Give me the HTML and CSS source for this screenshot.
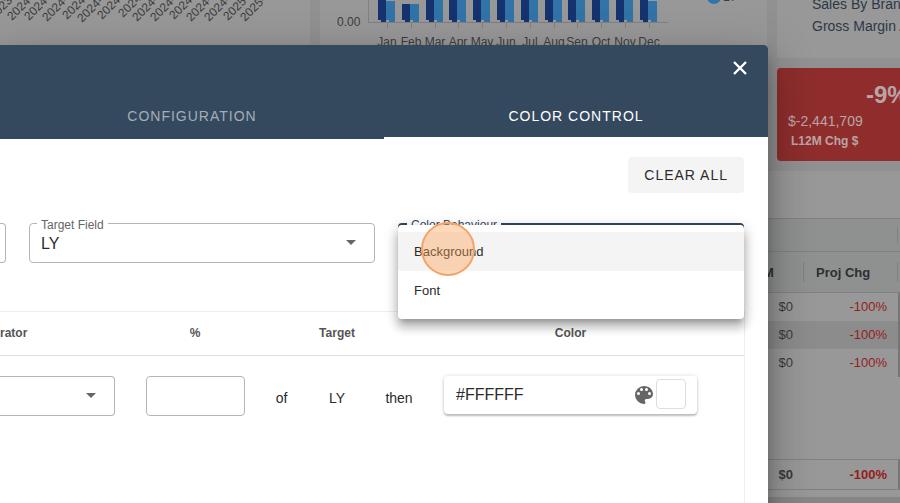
FILE: index.html
```html
<!DOCTYPE html>
<html lang="en">
<head>
<meta charset="utf-8">
<title>Color Control</title>
<link rel="stylesheet" href="styles.css">
</head>
<body>
<div class="dashboard">
  <div class="widgets">
    <section class="card">
      <svg class="chart dates" width="310" height="45" aria-label="Periods">
        <g id="dates"></g>
      </svg>
    </section>
    <section class="card">
      <svg class="chart" width="447" height="60" aria-label="Monthly sales">
        <path class="axis" d="M48.500 0V22M48 22.500H348"/>
        <g id="bars"></g>
        <text class="axis-value" x="17" y="26">0.00</text>
        <circle class="legend-dot" cx="394" cy="-3" r="7"/>
        <text x="403" y="1">LY</text>
      </svg>
    </section>
    <div class="side">
      <nav class="card links">
        <a href="#brand">Sales By Brand</a>
        <a href="#margin">Gross Margin Analysis</a>
      </nav>
      <section class="kpi">
        <strong class="kpi-change">-9%</strong>
        <span class="kpi-value">$-2,441,709</span>
        <span class="kpi-label">L12M Chg $</span>
      </section>
    </div>
  </div>
  <section class="card report">
    <table class="grid">
      <colgroup><col><col class="col-m"><col class="col-chg"><col class="col-bar"></colgroup>
      <thead>
        <tr class="band"><th></th><th></th><th><i></i></th><th></th></tr>
        <tr class="heads"><th></th><th>M<i></i></th><th>Proj Chg<i></i></th><th></th></tr>
      </thead>
      <tbody>
        <tr><td></td><td>$0</td><td class="neg">-100%</td><td class="thumb"></td></tr>
        <tr class="alt"><td></td><td>$0</td><td class="neg">-100%</td><td class="thumb"></td></tr>
        <tr><td></td><td>$0</td><td class="neg">-100%</td><td class="thumb"></td></tr>
        <tr class="filler"><td></td><td></td><td></td><td></td></tr>
      </tbody>
      <tfoot>
        <tr><td></td><td>$0</td><td class="neg">-100%</td><td class="thumb"></td></tr>
      </tfoot>
    </table>
  </section>
</div>

<div class="dialog" role="dialog" aria-label="Color control">
  <header class="dialog-head">
    <button class="close" type="button" aria-label="Close">
      <svg width="14" height="14" viewBox="0 0 14 14"><path d="M1 1L13 13M13 1L1 13"/></svg>
    </button>
    <div class="tabs" role="tablist">
      <button class="tab" type="button" role="tab">CONFIGURATION</button>
      <button class="tab active" type="button" role="tab" aria-selected="true">COLOR CONTROL</button>
    </div>
  </header>
  <div class="dialog-body">
    <div class="actions"><button class="clear" type="button">CLEAR ALL</button></div>
    <div class="fields">
      <div class="field cut"></div>
      <div class="field">
        <label for="target">Target Field</label>
        <select id="target"><option>LY</option></select>
        <svg class="caret" width="10" height="5" viewBox="0 0 10 5"><path d="M0 0L5 5L10 0Z"/></svg>
      </div>
      <div class="field focused">
        <label id="behaviour">Color Behaviour</label>
        <div class="menu" role="listbox" aria-labelledby="behaviour">
          <button class="option hovered" type="button" role="option">Background</button>
          <button class="option" type="button" role="option">Font</button>
          <span class="pointer"></span>
        </div>
      </div>
    </div>
    <table class="rules">
      <colgroup><col class="c-op"><col class="c-pct"><col class="c-of"><col class="c-target"><col class="c-then"><col><col class="c-end"></colgroup>
      <thead>
        <tr><th class="first">rator</th><th>%</th><th></th><th>Target</th><th></th><th>Color</th><th></th></tr>
      </thead>
      <tbody>
        <tr>
          <td class="op">
            <div class="field cut">
              <select aria-label="Operator"><option></option></select>
              <svg class="caret" width="10" height="5" viewBox="0 0 10 5"><path d="M0 0L5 5L10 0Z"/></svg>
            </div>
          </td>
          <td class="pct"><input class="percent" type="text" aria-label="Percent"></td>
          <td class="word">of</td>
          <td class="word">LY</td>
          <td class="word">then</td>
          <td class="pick">
            <div class="color-field">
              <input type="text" value="#FFFFFF" aria-label="Color">
              <svg width="24" height="24" viewBox="0 0 24 24"><path d="M17.500,12A1.500,1.500 0 0,1 16,10.500A1.500,1.500 0 0,1 17.500,9A1.500,1.500 0 0,1 19,10.500A1.500,1.500 0 0,1 17.500,12M14.500,8A1.500,1.500 0 0,1 13,6.500A1.500,1.500 0 0,1 14.500,5A1.500,1.500 0 0,1 16,6.500A1.500,1.500 0 0,1 14.500,8M9.500,8A1.500,1.500 0 0,1 8,6.500A1.500,1.500 0 0,1 9.500,5A1.500,1.500 0 0,1 11,6.500A1.500,1.500 0 0,1 9.500,8M6.500,12A1.500,1.500 0 0,1 5,10.500A1.500,1.500 0 0,1 6.500,9A1.500,1.500 0 0,1 8,10.500A1.500,1.500 0 0,1 6.500,12M12,3A9,9 0 0,0 3,12A9,9 0 0,0 12,21A1.500,1.500 0 0,0 13.500,19.500C13.500,19.110 13.350,18.760 13.110,18.500C12.880,18.230 12.730,17.880 12.730,17.500A1.500,1.500 0 0,1 14.230,16H16A5,5 0 0,0 21,11C21,6.580 16.970,3 12,3Z"/></svg>
              <button class="swatch" type="button" aria-label="Pick a color"></button>
            </div>
          </td>
          <td></td>
        </tr>
      </tbody>
    </table>
  </div>
</div>
<script src="charts.js"></script>
</body>
</html>
```

FILE: charts.js
```js
const NS = "http://www.w3.org/2000/svg";

function add(parent, tag, attrs, text) {
  const el = document.createElementNS(NS, tag);
  for (const key in attrs) el.setAttribute(key, attrs[key]);
  if (text) el.textContent = text;
  parent.appendChild(el);
}

// Monthly bars: two series per month
const bars = document.getElementById("bars");
const months = ["Jan", "Feb", "Mar", "Apr", "May", "Jun", "Jul", "Aug", "Sep", "Oct", "Nov", "Dec"];
const tops = { Jan: [0, 1], Feb: [4, 4], Dec: [0, 1] };
months.forEach((month, i) => {
  const x = Math.round(67 + i * 23.8);
  const [a, b] = tops[month] || [0, 0];
  add(bars, "path", { class: "axis", d: `M${x}.5 22V28` });
  add(bars, "path", { class: "bar-a", d: `M${x - 9} ${a}H${x - 1}V22H${x - 6}V20H${x - 9}Z` });
  add(bars, "path", { class: "bar-b", d: `M${x - 1} ${b}H${x + 8}V22H${x + 2}V20H${x - 1}Z` });
  add(bars, "text", { x, y: 46, "text-anchor": "middle" }, month);
});

// Slanted period labels
const dates = document.getElementById("dates");
const labels = [
  [-6, 20, "2023-1"], [12, 21, "2024-"], [29, 21, "2024-"], [47, 22, "2024-"], [67, 20, "2024-"],
  [82, 23, "2024-"], [102, 20, "2024-"], [123, 18, "2024"], [137, 22, "2024-"], [155, 22, "2024-"],
  [174, 20, "2024-"], [191, 22, "2024-"], [209, 22, "2024-"], [228, 21, "2025"], [245, 22, "2025-"]
];
labels.forEach(([x, y, label]) => add(dates, "text", { transform: `translate(${x} ${y}) rotate(-45)` }, label));
```

FILE: styles.css
```css
* {
  box-sizing: border-box;
}

body {
  margin: 0;
  min-height: 100vh;
  overflow: hidden;
  position: relative;
  background: #919191;
  color: #2b2b2b;
  font-family: "Liberation Sans", Arial, sans-serif;
  font-size: 13px;
}

button,
input,
select {
  font: inherit;
  color: inherit;
  border: 0;
  margin: 0;
  padding: 0;
  background: none;
}

/* Dimmed dashboard */
.dashboard {
  display: flex;
  flex-direction: column;
  gap: 10px;
  height: 100vh;
  overflow: hidden;
}

.widgets {
  display: grid;
  grid-template-columns: 310px minmax(0, 1fr) 123px;
  gap: 10px;
}

.card {
  background: #989898;
  overflow: hidden;
}

.chart {
  display: block;
  font-size: 12px;
  fill: #3c3c3c;
}

.axis {
  fill: none;
  stroke: #818181;
}

.bar-a {
  fill: #17336f;
}

.bar-b,
.legend-dot {
  fill: #3273a8;
}

.side {
  display: flex;
  flex-direction: column;
  gap: 10px;
}

.links {
  height: 58px;
  display: flex;
  flex-direction: column;
  padding-left: 35px;
}

.links a {
  color: #2c3847;
  font-size: 14px;
  line-height: 22px;
  text-decoration: none;
  white-space: nowrap;
}

.links a:first-child {
  margin-top: -7px;
}

.kpi {
  height: 93px;
  border-radius: 4px 0 0 4px;
  padding: 11px 0 0 11px;
  background: #8f2d2d;
  color: #b9a5a5;
  display: flex;
  flex-direction: column;
  overflow: hidden;
}

.kpi-change {
  padding-left: 78px;
  font-size: 24px;
  line-height: 32px;
}

.kpi-value {
  font-size: 14px;
  line-height: 20px;
}

.kpi-label {
  padding-left: 3px;
  font-size: 12px;
  font-weight: bold;
  line-height: 20px;
}

.report {
  flex: 1;
  padding-top: 47px;
  border-bottom: 6px solid #868686;
}

.grid {
  width: 100%;
  table-layout: fixed;
  border-collapse: collapse;
  color: #3a3a3a;
  border-bottom: 1px solid #7f8284;
}

.col-m {
  width: 53px;
}

.col-chg {
  width: 94px;
}

.col-bar {
  width: 2px;
}

.grid th,
.grid td {
  padding: 0 11px;
  height: 28px;
  position: relative;
}

.grid th {
  padding-left: 12px;
  background: #8f9191;
  color: #2c2f31;
  text-align: left;
  border-top: 1px solid #7f8284;
  border-bottom: 1px solid #7f8284;
}

.grid th i {
  position: absolute;
  right: 0;
  top: 25%;
  bottom: 25%;
  border-right: 1px solid #7c8184;
}

.grid .band th {
  height: 33px;
}

.grid .heads th {
  height: 41px;
}

.grid td {
  text-align: right;
}

.grid td.neg {
  color: #961c1c;
}

.grid .alt td {
  background: #8c8c8c;
}

.grid td.thumb,
.grid .alt td.thumb {
  padding: 0;
  background: #767676;
}

.grid .filler td {
  height: 83px;
}

.grid tfoot td {
  height: 30px;
  border-top: 1px solid #7f8284;
  font-weight: bold;
}

/* Dialog */
.dialog {
  position: absolute;
  top: 45px;
  left: 0;
  right: 132px;
  bottom: 0;
  display: flex;
  flex-direction: column;
  background: #fff;
  border-top-right-radius: 4px;
  box-shadow: 0 11px 15px rgba(0, 0, 0, .2), 0 9px 46px 8px rgba(0, 0, 0, .12), 0 24px 38px 3px rgba(0, 0, 0, .14);
}

.dialog-head {
  display: flex;
  flex-direction: column;
  background: #34495e;
  border-top-right-radius: 4px;
}

.close {
  align-self: flex-end;
  display: grid;
  place-items: center;
  width: 24px;
  height: 24px;
  margin: 11px 16px 13px;
}

.close path {
  fill: none;
  stroke: #fff;
  stroke-width: 2.400;
}

.tabs {
  display: flex;
}

.tab {
  flex: 1;
  height: 46px;
  padding-top: 2px;
  font-size: 14px;
  letter-spacing: 1px;
  color: #a4aeb9;
  border-bottom: 2px solid transparent;
}

.tab.active {
  color: #fff;
  border-bottom-color: #fff;
}

.dialog-body {
  flex: 1;
  display: flex;
  flex-direction: column;
  padding: 18px 23px 0 0;
}

.actions {
  display: flex;
  justify-content: flex-end;
  margin-bottom: 30px;
  padding-right: 1px;
}

.clear {
  height: 36px;
  padding: 0 16px;
  border-radius: 4px;
  background: #f4f4f4;
  font-size: 14px;
  letter-spacing: 1px;
}

.fields {
  display: grid;
  grid-template-columns: 6px 1fr 1fr;
  gap: 23px;
  margin-bottom: 48px;
  padding-right: 1px;
}

.field {
  position: relative;
  height: 40px;
  border: 1px solid #b5b5b5;
  border-radius: 4px;
}

.field.cut {
  border-left: 0;
  border-radius: 0 4px 4px 0;
}

.field.focused {
  border: 2px solid #34495e;
}

.field label {
  position: absolute;
  top: -6px;
  left: 7px;
  padding: 0 4px;
  background: #fff;
  color: #666;
  font-size: 12px;
  line-height: 14px;
}

.field.focused label {
  top: -7px;
  color: #34495e;
}

.field select {
  appearance: none;
  width: 100%;
  height: 100%;
  padding-left: 11px;
  font-size: 16px;
}

.caret {
  position: absolute;
  top: 16px;
  right: 18px;
  fill: #666;
}

.menu {
  position: absolute;
  top: 0;
  left: -2px;
  right: -2px;
  z-index: 1;
  padding: 7px 0 9px;
  border-radius: 4px;
  background: #fff;
  box-shadow: 0 5px 5px -3px rgba(0, 0, 0, .2), 0 8px 10px 1px rgba(0, 0, 0, .2), 0 3px 14px 2px rgba(0, 0, 0, .14);
}

.option {
  display: block;
  width: 100%;
  height: 39px;
  padding-left: 16px;
  text-align: left;
}

.option.hovered {
  background: #f4f4f4;
}

.pointer {
  position: absolute;
  top: -3px;
  left: 23px;
  width: 54px;
  height: 54px;
  border: 2px solid #f2a467;
  border-radius: 50%;
  background: rgba(255, 160, 80, .4);
}

.rules {
  flex: 1;
  width: 100%;
  table-layout: fixed;
  border-spacing: 0;
  border-top: 1px solid #eee;
  border-right: 1px solid #eee;
}

.c-op,
.c-pct {
  width: 130px;
}

.c-of {
  width: 43px;
}

.c-target {
  width: 68px;
}

.c-then {
  width: 56px;
}

.c-end {
  width: 30px;
}

.rules th {
  height: 44px;
  padding: 0 0 2px;
  border-bottom: 1px solid #ddd;
  color: #555;
  font-size: 12px;
}

.rules th.first {
  text-align: left;
}

.rules td {
  padding: 20px 0 0;
  text-align: center;
  vertical-align: top;
}

.rules .op {
  padding-right: 15px;
}

.percent {
  display: block;
  width: 99px;
  height: 40px;
  margin: 0 auto;
  border: 1px solid #b5b5b5;
  border-radius: 4px;
}

.rules .word {
  padding-top: 32px;
  font-size: 14px;
  line-height: 20px;
}

.rules .pick {
  padding-left: 17px;
  padding-right: 17px;
}

.color-field {
  display: flex;
  align-items: center;
  height: 38px;
  padding: 0 11px 3px 12px;
  border-radius: 4px;
  background: #fff;
  box-shadow: 0 2px 2px rgba(0, 0, 0, .22), 0 0 4px rgba(0, 0, 0, .14);
}

.color-field input {
  flex: 1;
  min-width: 0;
  padding-top: 2px;
  font-size: 16px;
}

.color-field svg {
  margin-top: 2px;
  fill: #666;
}

.swatch {
  width: 30px;
  height: 30px;
  border: 1px solid #ddd;
  border-radius: 4px;
}
```
